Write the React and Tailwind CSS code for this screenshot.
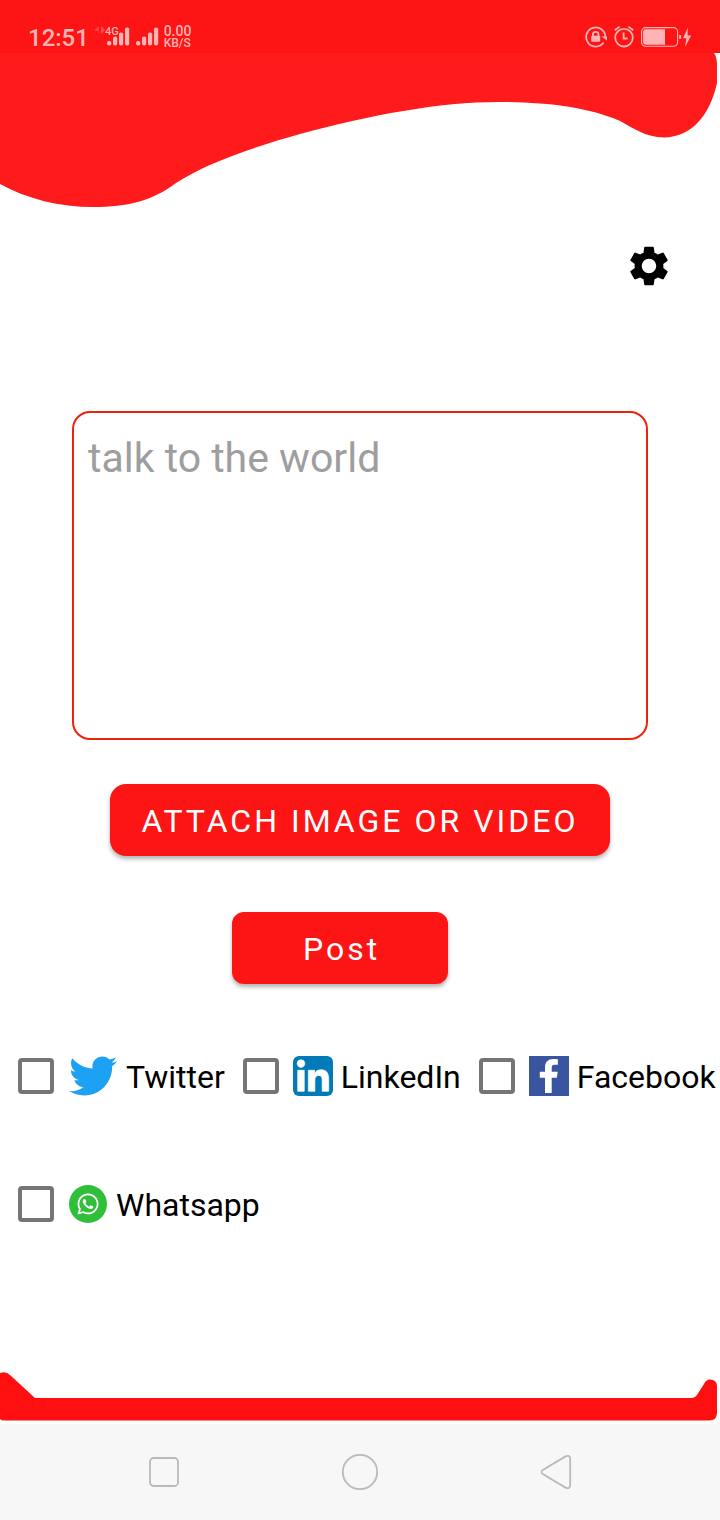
import { FaTwitter, FaWhatsapp } from "react-icons/fa";
import { MdSettings } from "react-icons/md";

function SignalBars() {
  return (
    <svg viewBox="0 0 23 19" className="h-[19px] w-[23px]" fill="currentColor" aria-hidden="true">
      <rect x="0" y="14" width="4.4" height="4.6" rx="2" />
      <rect x="6" y="9.5" width="4.2" height="9" rx="1.8" />
      <rect x="12" y="5.5" width="4.2" height="13" rx="1.8" />
      <rect x="18" y="0.5" width="4.2" height="18" rx="1.8" />
    </svg>
  );
}

function DataArrows() {
  return (
    <svg viewBox="0 0 10 8" className="h-2 w-[10px] opacity-30" fill="currentColor" aria-hidden="true">
      <path d="M0 4 3 0.5h1v7H3V5H0zM6 0.5h1L10 4 7 7.5H6z" />
    </svg>
  );
}

function RotationLock() {
  return (
    <svg viewBox="0 0 22 22" className="h-[22px] w-[22px]" fill="none" stroke="currentColor" strokeWidth="1.8" aria-hidden="true">
      <path d="M20.4 11A9.6 9.6 0 1 0 18.6 16.6" />
      <path d="M16.6 10.4H22v4z" fill="currentColor" stroke="none" />
      <rect x="6.2" y="9.8" width="9" height="6" rx="1" fill="currentColor" stroke="none" />
      <path d="M7.9 10.5V8.6a2.8 2.8 0 0 1 5.6 0v1.9" />
    </svg>
  );
}

function AlarmClock() {
  return (
    <svg viewBox="0 0 20 23" className="h-[23px] w-5" fill="none" stroke="currentColor" strokeWidth="1.8" aria-hidden="true">
      <circle cx="10" cy="12.7" r="8.8" />
      <path d="M0.8 5.2 5.6 1.6M19.2 5.2 14.4 1.6" />
      <path d="M9.6 7.6v5.9h4" />
    </svg>
  );
}

function Battery() {
  return (
    <svg viewBox="0 0 51 20" className="h-5 w-[51px]" fill="currentColor" aria-hidden="true">
      <rect x="0.6" y="0.6" width="36" height="18.6" rx="4" fill="none" stroke="currentColor" strokeWidth="1.1" />
      <path d="M4.5 2.3H24v15.4H4.5a2.4 2.4 0 0 1-2.4-2.4V4.7a2.4 2.4 0 0 1 2.4-2.4z" />
      <path d="M38.2 8h1q1 0 1 1v2q0 1-1 1h-1z" />
      <path d="M46.8 0.8 42 11.2h3.4L44 20 50.2 8.6h-3.6z" />
    </svg>
  );
}

function StatusBar() {
  return (
    <div className="flex h-[53px] items-end justify-between bg-[#fd1414] pr-7 pb-1 pl-7 text-[#ffb5b5]">
      <div className="flex items-end">
        <span className="text-2xl leading-[22px] font-medium">12:51</span>
        <div className="flex items-start pb-3 pl-[6px]">
          <DataArrows />
          <span className="text-[11px] leading-[11px] font-medium">4G</span>
        </div>
        <div className="-ml-3 flex gap-[6px] pb-[3px]">
          <SignalBars />
          <SignalBars />
        </div>
        <div className="flex flex-col pl-[5px] font-medium">
          <span className="text-sm leading-[13px]">0.00</span>
          <span className="text-xs leading-[11px]">KB/S</span>
        </div>
      </div>
      <div className="flex items-center gap-[7px] pb-px">
        <RotationLock />
        <AlarmClock />
        <Battery />
      </div>
    </div>
  );
}

function LinkedInLogo() {
  return (
    <svg viewBox="0 0 40 40" className="size-10 shrink-0" aria-hidden="true">
      <rect width="40" height="40" rx="6" fill="#007ab9" />
      <path
        transform="translate(4.2 3.8) scale(0.0703)"
        fill="#fff"
        stroke="#fff"
        strokeWidth="10"
        d="M100.28 448H7.4V148.9h92.88zM53.79 108.1C24.09 108.1 0 83.5 0 53.8a53.79 53.79 0 0 1 107.58 0c0 29.7-24.1 54.3-53.79 54.3zM447.9 448h-92.68V302.4c0-34.7-.7-79.2-48.29-79.2-48.29 0-55.69 37.7-55.69 76.7V448h-92.78V148.9h89.08v40.8h1.3c12.4-23.5 42.69-48.3 87.88-48.3 94 0 111.28 61.9 111.28 142.3V448z"
      />
    </svg>
  );
}

function FacebookLogo() {
  return (
    <svg viewBox="0 0 40 40" className="size-10 shrink-0" aria-hidden="true">
      <rect width="40" height="40" fill="#3a559f" />
      <path fill="#fff" d="M16 37V21.7h-5.2v-6H16V11.4C16 6 19.2 3 24.2 3c1.9 0 3.6.1 4.7.3v5.5h-3.2c-2.4 0-3 1.2-3 2.9v4h6l-.8 6h-5.2V37z" />
    </svg>
  );
}

function WhatsappLogo() {
  return (
    <span className="flex size-10 shrink-0 items-center justify-center">
      <span className="flex size-[38px] items-center justify-center rounded-full bg-[#30bf39] text-white">
        <FaWhatsapp className="size-6" aria-hidden="true" />
      </span>
    </span>
  );
}

function TwitterLogo() {
  return <FaTwitter className="mx-px size-12 shrink-0 text-[#1da1f2]" aria-hidden="true" />;
}

const networks = [
  { id: "twitter", label: "Twitter", Logo: TwitterLogo },
  { id: "linkedin", label: "LinkedIn", Logo: LinkedInLogo },
  { id: "facebook", label: "Facebook", Logo: FacebookLogo },
  { id: "whatsapp", label: "Whatsapp", Logo: WhatsappLogo },
];

function NetworkOption({ id, label, Logo }) {
  return (
    <div className="flex h-12 items-center gap-[14px]">
      <input
        id={id}
        type="checkbox"
        className="size-9 shrink-0 appearance-none rounded-[4px] border-4 border-[#757575] checked:bg-[#fd1414]"
      />
      <label htmlFor={id} className="flex items-center gap-2 text-[32px] leading-10 whitespace-nowrap text-black">
        <Logo />
        <span className="pt-[2px]">{label}</span>
      </label>
    </div>
  );
}

function NavigationBar() {
  return (
    <nav className="flex h-24 items-center justify-around bg-[#f7f7f7] px-[68px] text-[#bababa]">
      <button type="button" aria-label="Recent apps">
        <svg viewBox="0 0 32 32" className="size-8" fill="none" stroke="currentColor" strokeWidth="1.8">
          <rect x="2" y="2" width="28" height="28" rx="3.5" />
        </svg>
      </button>
      <button type="button" aria-label="Home">
        <svg viewBox="0 0 38 38" className="size-[38px]" fill="none" stroke="currentColor" strokeWidth="1.8">
          <circle cx="19" cy="19" r="17.2" />
        </svg>
      </button>
      <button type="button" aria-label="Back">
        <svg viewBox="0 0 32 36" className="h-9 w-8" fill="none" stroke="currentColor" strokeWidth="1.8">
          <path d="M2.8 15.9 25.5 2.4Q30 .6 30.2 5V31Q30 35.4 25.5 33.6L2.8 20.1Q.2 18 2.8 15.9Z" />
        </svg>
      </button>
    </nav>
  );
}

export default function App() {
  return (
    <div className="flex min-h-screen flex-col bg-white font-['Roboto',sans-serif]">
      <StatusBar />
      <svg viewBox="0 0 720 155" preserveAspectRatio="none" className="h-[155px] w-full shrink-0" aria-hidden="true">
        <path
          fill="#ff1b1b"
          d="M0 0H714Q717 4 717 12V30C710 62 692 84 664 84.5C645 84 635 76 620 68C588 54 545 49 498 49C440 49 370 62 300 81C250 95 205 111 176 130C152 148 128 154 93 154C60 154 27 146 0 131Z"
        />
      </svg>
      <header className="flex justify-end pt-[34px] pr-[47px]">
        <button type="button" aria-label="Settings" className="text-black">
          <MdSettings className="size-12" />
        </button>
      </header>

      <main className="flex grow flex-col items-center pt-[121px]">
        <textarea
          aria-label="Message"
          placeholder="talk to the world"
          className="h-[329px] w-4/5 resize-none rounded-[18px] border-2 border-[#ee220c] px-[14px] py-5 text-[41px] leading-[50px] text-black outline-none placeholder:text-[#9e9e9e]"
        />
        <button
          type="button"
          className="mt-11 h-[72px] rounded-2xl bg-[#fd1414] px-8 pt-[2px] text-[32px] leading-10 tracking-[3px] whitespace-nowrap text-white uppercase shadow-[0_3px_4px_rgba(0,0,0,0.3)]"
        >
          Attach image or video
        </button>
        <button
          type="button"
          className="mt-14 mr-10 h-[72px] w-[30%] rounded-xl bg-[#fd1414] pt-[2px] pl-[3px] text-[32px] leading-10 tracking-[3px] text-white shadow-[0_3px_4px_rgba(0,0,0,0.3)]"
        >
          Post
        </button>
        <div className="mt-[68px] flex w-full flex-wrap gap-x-[18px] gap-y-20 pl-[18px]">
          {networks.map((network) => (
            <NetworkOption key={network.id} {...network} />
          ))}
        </div>
      </main>

      <svg viewBox="0 0 720 52" preserveAspectRatio="none" className="h-[52px] w-full shrink-0" aria-hidden="true">
        <path
          fill="#ff0f0f"
          d="M0 1Q6 -1 10 3L35 26H692Q695 26 697 23L704 12Q706 7.5 710 7.5Q717 8 717 14V41Q717 48.5 709 48.5H4Q1 48.5 0 47Z"
        />
      </svg>
      <NavigationBar />
    </div>
  );
}
